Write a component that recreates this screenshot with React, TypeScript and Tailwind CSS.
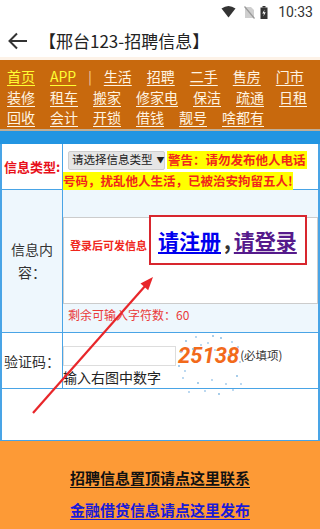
import React from "react";

const dots: [number, number][] = [
  [186, 341], [196, 337], [208, 343], [221, 338], [232, 342], [181, 352], [193, 349], [215, 350], [238, 347],
  [179, 366], [240, 362], [183, 378], [198, 383], [212, 380], [226, 384], [237, 376], [189, 392], [205, 391],
  [219, 394], [233, 390], [201, 345], [229, 355], [185, 371], [241, 384], [213, 336],
];

function Nav({ items }: { items: { t: string; y?: boolean; bar?: boolean }[] }) {
  return (
    <div className="flex items-center h-[20.5px] gap-[15px]">
      {items.map((it, i) =>
        it.bar ? (
          <span key={i} className="text-[#f5d9b0] text-[13px] -mx-[3px]">|</span>
        ) : (
          <span
            key={i}
            className={`underline underline-offset-[3px] text-[14px] leading-none whitespace-nowrap ${it.y ? "text-[#ffff33]" : "text-[#fff4e2]"}`}
          >
            {it.t}
          </span>
        )
      )}
    </div>
  );
}

export default function App() {
  return (
    <div className="relative w-[320px] h-[529px] overflow-hidden bg-white flex flex-col font-['Noto_Sans_CJK_SC',sans-serif]">
      {/* status bar */}
      <div className="h-[24px] flex items-center justify-end pr-[7px] shrink-0">
        <svg width="15" height="12" viewBox="0 0 15 12" className="mr-[8px]">
          <path d="M0.5 2.5 Q7.5 -2.5 14.5 2.5 L7.5 11.5 Z" fill="#333" />
        </svg>
        <svg width="11" height="13" viewBox="0 0 11 13" className="mr-[5px]">
          <path d="M1 1 H7 L10 4 V12 H1 Z" fill="#cfcfcf" />
          <path d="M0.5 0.5 L10.5 12.5" stroke="#9a9a9a" strokeWidth="1.2" />
        </svg>
        <svg width="8" height="13" viewBox="0 0 8 13" className="mr-[10px]">
          <rect x="2.5" y="0" width="3" height="1.5" fill="#333" />
          <rect x="0.5" y="1.5" width="7" height="11.5" fill="#333" />
          <path d="M4.6 3.5 L2.3 7.6 H4 L3.4 10.5 L5.7 6.3 H4 Z" fill="#fff" />
        </svg>
        <span className="font-['Roboto',sans-serif] text-[14px] text-[#333] leading-none">10:33</span>
      </div>
      {/* header */}
      <div className="h-[33px] flex items-center shrink-0">
        <svg width="20" height="18" viewBox="0 0 20 18" className="ml-[8px]">
          <path d="M19 9 H2 M9 1.5 L1.5 9 L9 16.5" stroke="#333" strokeWidth="2" fill="none" />
        </svg>
        <span className="ml-[11px] text-[17px] text-[#222] leading-none">【邢台123-招聘信息】</span>
      </div>
      <div className="h-[3px] bg-[#fdf2e7] shrink-0" />
      {/* nav */}
      <div className="h-[69px] bg-[#c8690d] pt-[6px] px-[7px] shrink-0">
        <Nav items={[{ t: "首页", y: true }, { t: "APP", y: true }, { t: "", bar: true }, { t: "生活" }, { t: "招聘" }, { t: "二手" }, { t: "售房" }, { t: "门市" }]} />
        <Nav items={[{ t: "装修" }, { t: "租车" }, { t: "搬家" }, { t: "修家电" }, { t: "保洁" }, { t: "疏通" }, { t: "日租" }]} />
        <Nav items={[{ t: "回收" }, { t: "会计" }, { t: "开锁" }, { t: "借钱" }, { t: "靓号" }, { t: "啥都有" }]} />
      </div>
      <div className="h-[2px] bg-[#bfae98] shrink-0" />
      <div className="h-[13px] bg-[#2295e2] shrink-0" />
      {/* table */}
      <div className="border-x-2 border-[#49a4e6] shrink-0">
        {/* row 1 */}
        <div className="flex h-[46px] border-b border-[#49a4e6]">
          <div className="w-[61px] border-r border-[#49a4e6] flex items-center justify-center">
            <span className="text-[13px] font-bold text-[#e8101a] leading-none whitespace-nowrap">信息类型:</span>
          </div>
          <div className="flex-1 pt-[5px]">
            <div className="flex items-center h-[22px]">
              <div className="ml-[5px] w-[97px] h-[19px] bg-[#e6e6e6] border border-[#cfcfcf] rounded-[2px] flex items-center pl-[3px] text-[11.5px] text-[#222] leading-none whitespace-nowrap">
                请选择信息类型<span className="text-[8px] ml-[4px]">▼</span>
              </div>
              <span className="ml-[2px] bg-[#ffff00] text-[#f0261c] font-bold text-[12.5px] leading-[18px] px-[1px] whitespace-nowrap">警告：请勿发布他人电话</span>
            </div>
            <div className="flex items-center h-[19px]">
              <span className="bg-[#ffff00] text-[#f0261c] font-bold text-[12.5px] leading-[18px] whitespace-nowrap">号码，扰乱他人生活，已被治安拘留五人!</span>
            </div>
          </div>
        </div>
        {/* row 2 */}
        <div className="flex h-[143px] border-b border-[#49a4e6] bg-[#eef7fd]">
          <div className="w-[61px] border-r border-[#49a4e6] flex items-center justify-center">
            <span className="text-[14px] text-[#333] leading-[23px] text-center w-[44px]">信息内容：</span>
          </div>
          <div className="flex-1 flex flex-col">
            <div className="h-[27px]" />
            <div className="h-[87px] bg-white border border-[#cccccc] flex items-start">
              <span className="ml-[6px] mt-[22px] text-[11px] font-bold text-[#f0261c] leading-none whitespace-nowrap">登录后可发信息</span>
              <div className="-mt-[3px] ml-[2px] w-[158px] h-[50px] border-2 border-[#d8262e] bg-white flex items-center pl-[7px]">
                <span className="text-[21px] font-bold text-[#0000ee] underline underline-offset-[3px] leading-none whitespace-nowrap">请注册</span>
                <span className="text-[21px] font-bold text-[#333] leading-none mx-[3px]">,</span>
                <span className="text-[21px] font-bold text-[#551a8b] underline underline-offset-[3px] leading-none whitespace-nowrap">请登录</span>
              </div>
            </div>
            <div className="pl-[5px] pt-[2px] text-[12px] text-[#ea3a3a] leading-[18px]">剩余可输入字符数：60</div>
          </div>
        </div>
        {/* row 3 */}
        <div className="flex h-[56px] border-b border-[#49a4e6] bg-white">
          <div className="w-[61px] border-r border-[#49a4e6] flex items-center justify-center">
            <span className="text-[14px] text-[#333] leading-none whitespace-nowrap">验证码：</span>
          </div>
          <div className="flex-1 flex flex-col pt-[13px] relative">
            <div className="flex items-center h-[20px]">
              <div className="w-[113px] h-[20px] border border-[#dddddd] bg-white" />
              <span className="ml-[2px] font-['Roboto',sans-serif] italic font-bold text-[22px] text-[#f26a1b] leading-none">25138</span>
              <span className="ml-[1px] text-[11.5px] text-[#333] leading-none whitespace-nowrap">(必填项)</span>
            </div>
            <span className="mt-[2px] text-[14px] text-[#222] leading-[18px]">输入右图中数字</span>
          </div>
        </div>
        {/* row 4 */}
        <div className="h-[52px] border-b border-[#49a4e6] bg-white" />
      </div>
      {/* footer */}
      <div className="flex-1 bg-[#fd9a36] flex flex-col items-center pt-[27px] gap-[13px]">
        <span className="text-[15px] font-bold text-[#111] underline underline-offset-[3px] leading-[19px]">招聘信息置顶请点这里联系</span>
        <span className="text-[15px] font-bold text-[#1a1ad8] underline underline-offset-[3px] leading-[19px]">金融借贷信息请点这里发布</span>
      </div>
      {/* overlays */}
      <svg className="absolute left-0 top-0 pointer-events-none" width="320" height="529">
        {dots.map(([x, y], i) => (
          <circle key={i} cx={x} cy={y} r="0.9" fill={i % 3 === 0 ? "#7fb6e0" : "#9cc6ea"} />
        ))}
        <line x1="33" y1="413" x2="146" y2="285" stroke="#e8262a" strokeWidth="2.2" />
        <polygon points="153,277 148.2,290.3 140.5,283.5" fill="#e8262a" />
      </svg>
    </div>
  );
}
